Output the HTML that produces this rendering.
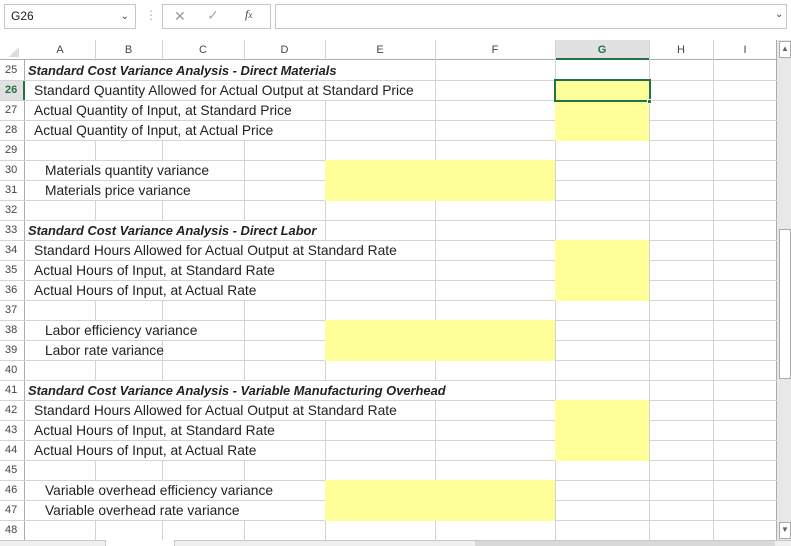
<!DOCTYPE html>
<html><head><meta charset="utf-8"><style>
*{margin:0;padding:0;box-sizing:border-box}
body{width:791px;height:546px;overflow:hidden;background:#fff;font-family:"Liberation Sans",sans-serif;position:relative}
.a{position:absolute}
.vl{position:absolute;width:1px;background:#d4d4d4;top:40px;height:500px}
.hl{position:absolute;height:1px;background:#d4d4d4;left:0;width:777px}
.rh{position:absolute;left:0;width:25px;font-size:11px;color:#444;text-align:left;padding-left:5px;line-height:20px}
.t{position:absolute;font-size:13.8px;color:#222;line-height:20px;white-space:nowrap}
.b{font-size:12.9px;font-weight:bold;font-style:italic}
.w{position:absolute;background:#fff;height:19px}
.y{position:absolute;background:#ffff99}
.ch{position:absolute;top:40px;height:20px;font-size:11px;color:#444;text-align:center;line-height:20px}
</style></head><body>
<div class="a" style="left:4px;top:4px;width:132px;height:25px;border:1px solid #c6c6c6;font-size:12px;line-height:23px;padding-left:6px;color:#222">G26<span style="position:absolute;right:6px;top:0;font-size:10px;color:#444">&#8964;</span></div>
<div class="a" style="left:145px;top:8px;font-size:12px;color:#aaa">&#8942;</div>
<div class="a" style="left:162px;top:4px;width:109px;height:25px;border:1px solid #c6c6c6"></div>
<div class="a" style="left:174px;top:8px;font-size:14px;color:#999">&#10005;</div>
<div class="a" style="left:207px;top:7px;font-size:14px;color:#aaa">&#10003;</div>
<div class="a" style="left:245px;top:7px;font-size:12px;color:#444;font-family:'Liberation Serif',serif;font-style:italic">f<span style="font-size:9px">x</span></div>
<div class="a" style="left:275px;top:4px;width:512px;height:25px;border:1px solid #c6c6c6"></div>
<div class="a" style="left:775px;top:9px;font-size:10px;color:#444">&#8964;</div>
<div class="a" style="left:0;top:40px;width:777px;height:20px;background:#fff;border-bottom:1px solid #ababab"></div>
<div class="a" style="left:0;top:60px;width:25px;height:480px;border-right:1px solid #ababab"></div>
<div class="a" style="left:9px;top:47px;width:0;height:0;border-left:10px solid transparent;border-bottom:10px solid #dcdcdc"></div>
<div class="a" style="left:555px;top:40px;width:94px;height:20px;background:#e1e1e1;border-bottom:2px solid #217346"></div>
<div class="a" style="left:0;top:80px;width:25px;height:20px;background:#e1e1e1;border-right:2px solid #217346"></div>
<div class="ch" style="left:25px;width:70px">A</div>
<div class="ch" style="left:95px;width:67px">B</div>
<div class="ch" style="left:162px;width:82px">C</div>
<div class="ch" style="left:244px;width:81px">D</div>
<div class="ch" style="left:325px;width:110px">E</div>
<div class="ch" style="left:435px;width:120px">F</div>
<div class="ch" style="left:555px;width:94px;color:#217346;font-weight:bold">G</div>
<div class="ch" style="left:649px;width:64px">H</div>
<div class="ch" style="left:713px;width:64px">I</div>
<div class="vl" style="left:95px"></div><div class="vl" style="left:162px"></div><div class="vl" style="left:244px"></div><div class="vl" style="left:325px"></div><div class="vl" style="left:435px"></div><div class="vl" style="left:555px"></div><div class="vl" style="left:649px"></div><div class="vl" style="left:713px"></div>
<div class="vl" style="left:776px;background:#ababab"></div>
<div class="hl" style="top:80px"></div><div class="hl" style="top:100px"></div><div class="hl" style="top:120px"></div><div class="hl" style="top:140px"></div><div class="hl" style="top:160px"></div><div class="hl" style="top:180px"></div><div class="hl" style="top:200px"></div><div class="hl" style="top:220px"></div><div class="hl" style="top:240px"></div><div class="hl" style="top:260px"></div><div class="hl" style="top:280px"></div><div class="hl" style="top:300px"></div><div class="hl" style="top:320px"></div><div class="hl" style="top:340px"></div><div class="hl" style="top:360px"></div><div class="hl" style="top:380px"></div><div class="hl" style="top:400px"></div><div class="hl" style="top:420px"></div><div class="hl" style="top:440px"></div><div class="hl" style="top:460px"></div><div class="hl" style="top:480px"></div><div class="hl" style="top:500px"></div><div class="hl" style="top:520px"></div>
<div class="y" style="left:555px;top:80px;width:94px;height:61px"></div>
<div class="y" style="left:325px;top:160px;width:230px;height:41px"></div>
<div class="y" style="left:555px;top:240px;width:94px;height:61px"></div>
<div class="y" style="left:325px;top:320px;width:230px;height:41px"></div>
<div class="y" style="left:555px;top:400px;width:94px;height:61px"></div>
<div class="y" style="left:325px;top:480px;width:230px;height:41px"></div>
<div class="w" style="left:26px;top:61px;width:409px"></div>
<div class="w" style="left:26px;top:81px;width:409px"></div>
<div class="w" style="left:26px;top:101px;width:299px"></div>
<div class="w" style="left:26px;top:121px;width:299px"></div>
<div class="w" style="left:26px;top:161px;width:218px"></div>
<div class="w" style="left:26px;top:181px;width:218px"></div>
<div class="w" style="left:26px;top:221px;width:299px"></div>
<div class="w" style="left:26px;top:241px;width:409px"></div>
<div class="w" style="left:26px;top:261px;width:299px"></div>
<div class="w" style="left:26px;top:281px;width:299px"></div>
<div class="w" style="left:26px;top:321px;width:218px"></div>
<div class="w" style="left:26px;top:341px;width:136px"></div>
<div class="w" style="left:26px;top:381px;width:529px"></div>
<div class="w" style="left:26px;top:401px;width:409px"></div>
<div class="w" style="left:26px;top:421px;width:299px"></div>
<div class="w" style="left:26px;top:441px;width:299px"></div>
<div class="w" style="left:26px;top:481px;width:299px"></div>
<div class="w" style="left:26px;top:501px;width:299px"></div>
<div class="a" style="left:554px;top:79px;width:97px;height:23px;border:2px solid #217346"></div>
<div class="a" style="left:647px;top:99px;width:5px;height:5px;background:#217346;border:1px solid #fff"></div>
<div class="rh" style="top:60px">25</div><div class="rh" style="top:80px;color:#217346;font-weight:bold">26</div><div class="rh" style="top:100px">27</div><div class="rh" style="top:120px">28</div><div class="rh" style="top:140px">29</div><div class="rh" style="top:160px">30</div><div class="rh" style="top:180px">31</div><div class="rh" style="top:200px">32</div><div class="rh" style="top:220px">33</div><div class="rh" style="top:240px">34</div><div class="rh" style="top:260px">35</div><div class="rh" style="top:280px">36</div><div class="rh" style="top:300px">37</div><div class="rh" style="top:320px">38</div><div class="rh" style="top:340px">39</div><div class="rh" style="top:360px">40</div><div class="rh" style="top:380px">41</div><div class="rh" style="top:400px">42</div><div class="rh" style="top:420px">43</div><div class="rh" style="top:440px">44</div><div class="rh" style="top:460px">45</div><div class="rh" style="top:480px">46</div><div class="rh" style="top:500px">47</div><div class="rh" style="top:520px">48</div>
<div class="t b" style="left:28px;top:61px">Standard Cost Variance Analysis - Direct Materials</div>
<div class="t" style="left:34px;top:81px">Standard Quantity Allowed for Actual Output at Standard Price</div>
<div class="t" style="left:34px;top:101px">Actual Quantity of Input, at Standard Price</div>
<div class="t" style="left:34px;top:121px">Actual Quantity of Input, at Actual Price</div>
<div class="t" style="left:45px;top:161px">Materials quantity variance</div>
<div class="t" style="left:45px;top:181px">Materials price variance</div>
<div class="t b" style="left:28px;top:221px">Standard Cost Variance Analysis - Direct Labor</div>
<div class="t" style="left:34px;top:241px">Standard Hours Allowed for Actual Output at Standard Rate</div>
<div class="t" style="left:34px;top:261px">Actual Hours of Input, at Standard Rate</div>
<div class="t" style="left:34px;top:281px">Actual Hours of Input, at Actual Rate</div>
<div class="t" style="left:45px;top:321px">Labor efficiency variance</div>
<div class="t" style="left:45px;top:341px">Labor rate variance</div>
<div class="t b" style="left:28px;top:381px">Standard Cost Variance Analysis - Variable Manufacturing Overhead</div>
<div class="t" style="left:34px;top:401px">Standard Hours Allowed for Actual Output at Standard Rate</div>
<div class="t" style="left:34px;top:421px">Actual Hours of Input, at Standard Rate</div>
<div class="t" style="left:34px;top:441px">Actual Hours of Input, at Actual Rate</div>
<div class="t" style="left:45px;top:481px">Variable overhead efficiency variance</div>
<div class="t" style="left:45px;top:501px">Variable overhead rate variance</div>
<div class="a" style="left:777px;top:40px;width:14px;height:500px;background:#e8e8e8"></div>
<div class="a" style="left:779px;top:41px;width:12px;height:17px;background:#fff;border:1px solid #ababab;font-size:8px;color:#666;text-align:center;line-height:14px">&#9650;</div>
<div class="a" style="left:779px;top:229px;width:12px;height:150px;background:#fff;border:1px solid #ababab"></div>
<div class="a" style="left:779px;top:522px;width:12px;height:17px;background:#fff;border:1px solid #ababab;font-size:8px;color:#666;text-align:center;line-height:14px">&#9660;</div>
<div class="a" style="left:0;top:540px;width:791px;height:6px;background:#f0f0f0;border-top:1px solid #c6c6c6"></div>
<div class="a" style="left:105px;top:540px;width:70px;height:6px;background:#fff;border-left:1px solid #c6c6c6;border-right:1px solid #c6c6c6"></div>
<div class="a" style="left:475px;top:541px;width:300px;height:5px;background:#d9d9d9"></div>
</body></html>
